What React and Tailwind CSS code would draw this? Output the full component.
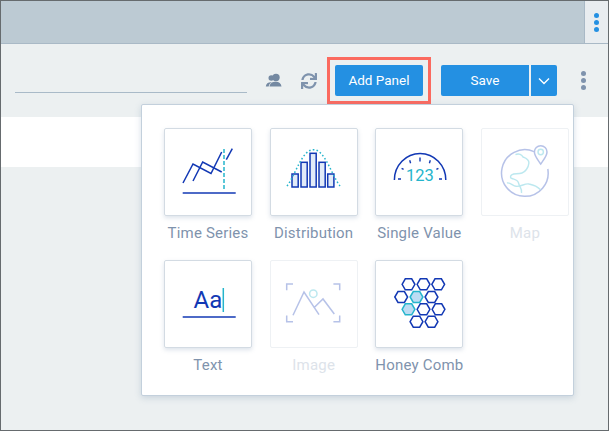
import React from "react";
import { FaSync } from "react-icons/fa";

const BLUE = "#1238b4";
const TEAL = "#25b5cc";

function TimeSeries() {
  return (
    <svg width="88" height="88" viewBox="0 0 88 88" fill="none">
      <path d="M17.7 65H70.7" stroke={BLUE} strokeWidth="1.5" />
      <path d="M18 55L28 36L46 45.5L56.7 24" stroke={BLUE} strokeWidth="1.5" />
      <path d="M28 53L37.7 34L56.7 44" stroke={BLUE} strokeWidth="1.5" />
      <path d="M61.3 31.7L67.3 20.7" stroke={BLUE} strokeWidth="1.5" />
      <path d="M59 21V61" stroke={TEAL} strokeWidth="1.5" strokeDasharray="4 2" />
    </svg>
  );
}
function Distribution() {
  const bars = [[22, 46, 13], [31, 34.3, 24.7], [40, 25.3, 33.7], [49, 34.3, 24.7], [57.7, 46, 13]];
  return (
    <svg width="88" height="88" viewBox="0 0 88 88" fill="none">
      {bars.map(([x, y, h]) => (
        <rect key={x} x={x} y={y} width="6.2" height={h} fill="#e2ebf8" stroke={BLUE} strokeWidth="1.5" />
      ))}
      <path d="M17 58C26 46 32 21.7 43.5 21.7S61 46 70 58" stroke={TEAL} strokeWidth="1.5" strokeDasharray="1.6 2.2" />
    </svg>
  );
}
function SingleValue() {
  return (
    <svg width="88" height="88" viewBox="0 0 88 88" fill="none">
      <path d="M18.4 52A25.7 26.5 0 0 1 69.8 52" stroke={BLUE} strokeWidth="1.5" />
      <path d="M44 29.5V33.5M33.7 32.3L34.6 35.2M54.3 32.3L53.4 35.2M25.6 40.3L27.6 41.4M62.4 40.3L60.4 41.4M22 51H25M63 51H66" stroke={BLUE} strokeWidth="1.4" />
      <text x="44" y="53" textAnchor="middle" fontFamily="Roboto, sans-serif" fontWeight="400" fontSize="16.5" fill={TEAL}>123</text>
    </svg>
  );
}
function MapIcon() {
  return (
    <svg width="88" height="88" viewBox="0 0 88 88" fill="none" opacity="0.3">
      <path d="M53 23.6A23.3 23.3 0 1 0 66.8 41" stroke={BLUE} strokeWidth="1.5" />
      <path d="M59.7 36C57 32 53.4 28 53.4 24A6.3 6.3 0 0 1 66 24C66 28 62.4 32 59.7 36Z" stroke={BLUE} strokeWidth="1.5" />
      <circle cx="59.7" cy="24" r="2.7" stroke={TEAL} strokeWidth="1.4" />
      <path d="M34.5 26.7C38 25 41 27 42 29C44 30 48 31 47.9 35C47.5 40 44 44 41 45C37 46.5 33 45 31 46.7C29 48 29 50 31 50.5C34 51.5 37 52 37.5 55C38.5 59 41.5 61 40.5 65" stroke={TEAL} strokeWidth="1.4" />
      <path d="M26 55C29 54 32 58 35 58.3C40 59 44 55 48 56C53 57 56 58 59.5 61.7" stroke={TEAL} strokeWidth="1.4" />
    </svg>
  );
}
function TextIcon() {
  return (
    <svg width="88" height="88" viewBox="0 0 88 88" fill="none">
      <text x="28.5" y="48" fontFamily="Roboto, sans-serif" fontSize="24" fill={BLUE}>Aa</text>
      <path d="M58.3 28V52" stroke={TEAL} strokeWidth="1.5" />
      <path d="M17.7 57H70.7" stroke={BLUE} strokeWidth="1.5" />
    </svg>
  );
}
function ImageIcon() {
  return (
    <svg width="88" height="88" viewBox="0 0 88 88" fill="none" opacity="0.3">
      <path d="M23 24H16.7V30.3M63.4 24H69.7V30.3M23 61.7H16.7V55.4M63.4 61.7H69.7V55.4" stroke={BLUE} strokeWidth="1.5" />
      <path d="M23 55.3L34 32L49 54.7M43.7 48L53 39L64.3 54" stroke={BLUE} strokeWidth="1.5" />
      <circle cx="43.3" cy="33.7" r="3.7" stroke={TEAL} strokeWidth="1.5" />
    </svg>
  );
}
function HoneyComb() {
  const hexes = [
    [32.5, 24.3], [47.5, 24.3], [62.2, 24.3],
    [25.2, 37], [40.5, 37, 1], [55.5, 37],
    [32.5, 49.3, 1], [47.5, 49.3], [62.5, 49.3],
    [40.5, 61.7], [55.5, 61.7],
  ];
  return (
    <svg width="88" height="88" viewBox="0 0 88 88" fill="none">
      {hexes.map(([x, y, on]) => (
        <path
          key={`${x}-${y}`}
          d={`M${x - 6.4} ${y}L${x - 3.2} ${y - 5.5}H${x + 3.2}L${x + 6.4} ${y}L${x + 3.2} ${y + 5.5}H${x - 3.2}Z`}
          stroke={on ? TEAL : BLUE}
          fill={on ? "#bcdcf3" : "none"}
          strokeWidth="1.5"
        />
      ))}
    </svg>
  );
}

const panels = [
  { label: "Time Series", Icon: TimeSeries },
  { label: "Distribution", Icon: Distribution },
  { label: "Single Value", Icon: SingleValue },
  { label: "Map", Icon: MapIcon, off: true },
  { label: "Text", Icon: TextIcon },
  { label: "Image", Icon: ImageIcon, off: true },
  { label: "Honey Comb", Icon: HoneyComb },
];

function Dots({ className }) {
  return (
    <div className={`flex flex-col gap-[2px] ${className}`}>
      <span className="w-[5px] h-[5px] rounded-full bg-current" />
      <span className="w-[5px] h-[5px] rounded-full bg-current" />
      <span className="w-[5px] h-[5px] rounded-full bg-current" />
    </div>
  );
}

export default function App() {
  return (
    <div className="relative w-[609px] h-[431px] overflow-hidden flex flex-col bg-[#ecf0f1] border border-[#666b6e] font-['Roboto',sans-serif]">
      <div className="h-[43px] shrink-0 flex justify-end bg-[#bccad3] border-b border-[#a9b9c6]">
        <div className="w-[24px] flex items-center justify-center bg-[#e9edf0] border-l border-[#a9b9c6]">
          <Dots className="text-[#2490e2]" />
        </div>
      </div>
      <div className="h-[73px] shrink-0 flex items-center pl-[14px]">
        <div className="w-[232px] h-[25px] border-b border-[#a9bac8]" />
        <svg className="ml-[18px]" width="17" height="16" viewBox="0 0 17 16" fill="#7489a2">
          <circle cx="6.3" cy="5" r="2.8" />
          <path d="M0.8 13.5C1 10.6 3 9.2 6 9.2L7 9.3C5 10.2 4 11.5 3.7 13.5Z" />
          <circle cx="11" cy="4.5" r="3.7" />
          <path d="M4.5 13.5C5 10 7.5 8.8 10.8 8.8C14 8.8 16.2 10.5 16.5 13.5Z" />
        </svg>
        <FaSync className="ml-[19px] text-[#7f93ad]" size={16} />
        <div className="ml-[10px] border-[3px] border-[#fb6a5f] px-[5px] py-[5px] flex">
          <button className="w-[88px] h-[31px] rounded-[2px] bg-[#2490e2] text-white text-[13.5px]">Add Panel</button>
        </div>
        <button className="ml-[10px] w-[88px] h-[31px] rounded-l-[2px] bg-[#2490e2] text-white text-[13.5px]">Save</button>
        <button className="ml-[2px] w-[26px] h-[31px] rounded-r-[2px] bg-[#2490e2] flex items-center justify-center">
          <svg width="12" height="8" viewBox="0 0 12 8" fill="none"><path d="M1 1.5L6 6.5L11 1.5" stroke="white" strokeWidth="1.4" /></svg>
        </button>
        <Dots className="ml-[24px] text-[#7f93ad]" />
      </div>
      <div className="h-[50px] shrink-0 bg-white" />
      <div className="absolute left-[140px] top-[103px] w-[433px] h-[292px] bg-white border border-[#c3d0dc] rounded-[2px] shadow-[0_2px_6px_rgba(120,145,175,0.3)] pl-[22px] pt-[23px]">
        <div className="grid grid-cols-[repeat(4,88px)] gap-x-[17.67px] gap-y-[16px]">
          {panels.map(({ label, Icon, off }) => (
            <div key={label} className="flex flex-col items-center">
              <div className={off
                ? "w-[88px] h-[88px] rounded-[2px] border border-[#eef1f4]"
                : "w-[88px] h-[88px] rounded-[2px] border border-[#d3dbe3] shadow-[0_2px_4px_rgba(120,145,175,0.25)]"}>
                <div className="-mt-px -ml-[0.5px]"><Icon /></div>
              </div>
              <div className={`mt-[6px] h-[22px] leading-[22px] text-[15px] tracking-[0.2px] whitespace-nowrap ${off ? "text-[#dde3ea]" : "text-[#7f93ad]"}`}>{label}</div>
            </div>
          ))}
        </div>
      </div>
    </div>
  );
}
